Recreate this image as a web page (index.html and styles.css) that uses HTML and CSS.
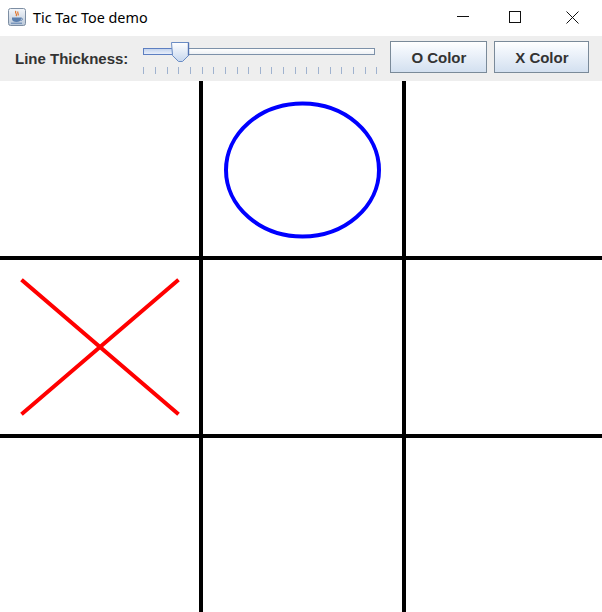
FILE: index.html
```html
<!DOCTYPE html>
<html>
<head>
<meta charset="utf-8">
<title>Tic Tac Toe demo</title>
<link rel="stylesheet" href="styles.css">
</head>
<body>
<div class="window">
  <div class="titlebar">
    <svg class="app-icon" width="18" height="18" viewBox="0 0 18 18">
      <defs>
        <linearGradient id="ig" x1="0" y1="0" x2="0" y2="1">
          <stop offset="0" stop-color="#f4f7fb"/>
          <stop offset="1" stop-color="#b9c7d8"/>
        </linearGradient>
      </defs>
      <rect x="0.5" y="0.5" width="17" height="17" rx="2" fill="url(#ig)" stroke="#7d8ea3"/>
      <path d="M8 3 C6 5 10 6 8 8 M10 3.5 C9 5 11 6 10 7.5" stroke="#e06b1a" stroke-width="1.1" fill="none"/>
      <path d="M4 9.5 H13 V11 C13 13 11 14 8.5 14 C6 14 4 13 4 11 Z" fill="#5b7fae"/>
      <path d="M13 10 C15 10 15 12.5 12.5 12.5" stroke="#5b7fae" stroke-width="1" fill="none"/>
      <path d="M3 15.2 H14" stroke="#5b7fae" stroke-width="1"/>
    </svg>
    <span class="title">Tic Tac Toe demo</span>
    <div class="controls">
      <svg class="ctl" width="46" height="36" viewBox="0 0 46 36"><path d="M17 16.5 H29" stroke="#111" stroke-width="1"/></svg>
      <svg class="ctl" width="58" height="36" viewBox="0 0 58 36"><rect x="23.5" y="11.5" width="11" height="11" fill="none" stroke="#111" stroke-width="1"/></svg>
      <svg class="ctl" width="58" height="36" viewBox="0 0 58 36"><path d="M22.5 11.5 L34.5 23.5 M34.5 11.5 L22.5 23.5" stroke="#111" stroke-width="1"/></svg>
    </div>
  </div>
  <div class="toolbar">
    <span class="label">Line Thickness:</span>
    <div class="slider">
      <div class="track">
        <div class="fill"></div>
        <svg class="thumb" width="19" height="20" viewBox="0 0 19 20">
          <defs>
            <linearGradient id="tg" x1="0" y1="0" x2="0" y2="1">
              <stop offset="0" stop-color="#ffffff"/>
              <stop offset="1" stop-color="#c5d6ee"/>
            </linearGradient>
          </defs>
          <path d="M0.5 0.5 H17.5 V13.5 L11.5 19.5 H7.5 L1.5 13.5 Z" fill="url(#tg)" stroke="#6a8cc4"/>
          <path d="M17.5 0.5 V13.5" stroke="#5374b4" stroke-width="1.4"/>
        </svg>
      </div>
      <div class="ticks">
        <i></i><i></i><i></i><i></i><i></i><i></i><i></i><i></i><i></i><i></i><i></i>
        <i></i><i></i><i></i><i></i><i></i><i></i><i></i><i></i><i></i><i></i>
      </div>
    </div>
    <button class="btn btn-o">O Color</button>
    <button class="btn btn-x">X Color</button>
  </div>
  <svg class="board" width="602" height="531" viewBox="0 0 602 531">
    <g stroke="#000" stroke-width="4">
      <line x1="201" y1="0" x2="201" y2="531"/>
      <line x1="404" y1="0" x2="404" y2="531"/>
      <line x1="0" y1="177" x2="602" y2="177"/>
      <line x1="0" y1="355" x2="602" y2="355"/>
    </g>
    <ellipse cx="302.5" cy="89" rx="76.5" ry="66.5" fill="none" stroke="#0000ff" stroke-width="4"/>
    <g stroke="#ff0000" stroke-width="4" stroke-linecap="square">
      <line x1="23" y1="200" x2="177" y2="332"/>
      <line x1="23" y1="332" x2="177" y2="200"/>
    </g>
  </svg>
</div>
</body>
</html>
```

FILE: styles.css
```css
html, body {
  margin: 0;
  padding: 0;
  background: #ffffff;
}

.window {
  width: 602px;
  height: 612px;
  overflow: hidden;
  display: flex;
  flex-direction: column;
}

.titlebar {
  height: 36px;
  display: flex;
  align-items: center;
  background: #ffffff;
  flex-shrink: 0;
}

.app-icon {
  margin-left: 8px;
  margin-top: -2px;
}

.title {
  margin-left: 7px;
  font-family: "Noto Sans", "Open Sans", sans-serif;
  font-size: 14.4px;
  color: #000;
  margin-top: -2px;
}

.controls {
  margin-left: auto;
  display: flex;
  align-self: stretch;
}

.ctl {
  display: block;
}

.toolbar {
  height: 45px;
  background: #eeeeee;
  display: flex;
  align-items: flex-start;
  flex-shrink: 0;
}

.label {
  flex: 0 0 112px;
  white-space: nowrap;
  font-family: "Liberation Sans", Arial, sans-serif;
  font-weight: bold;
  font-size: 15px;
  color: #333333;
  margin-left: 15px;
  margin-top: 14px;
  line-height: 17px;
}

.slider {
  flex: 0 0 234px;
  margin-left: 15px;
  padding-top: 12px;
}

.track {
  position: relative;
  height: 7px;
  width: 232px;
  box-sizing: border-box;
  border: 1px solid #7d91a9;
  background: linear-gradient(#ffffff, #eef1f5);
}

.fill {
  width: 28px;
  height: 100%;
  background: linear-gradient(#c4d4ee, #e8eefa);
  box-shadow: 0 0 0 1px #5d7fc1;
}

.thumb {
  position: absolute;
  left: 27px;
  top: -7px;
}

.ticks {
  margin-top: 12px;
  width: 234px;
  display: flex;
  justify-content: space-between;
}

.ticks i {
  display: block;
  width: 1px;
  height: 7px;
  background: #9fb2cf;
}

.btn {
  margin-top: 5px;
  height: 32px;
  box-sizing: border-box;
  border: 1px solid #7a8a99;
  border-radius: 0;
  background: linear-gradient(#ffffff 0%, #f0f5fb 30%, #d3e0f0 100%);
  font-family: "Liberation Sans", Arial, sans-serif;
  font-weight: bold;
  font-size: 15px;
  color: #333333;
  padding: 0;
}

.btn-o {
  margin-left: 13px;
  flex: 0 0 97px;
}

.btn-x {
  margin-left: 7px;
  flex: 0 0 95px;
}

.board {
  display: block;
  background: #ffffff;
}
```
